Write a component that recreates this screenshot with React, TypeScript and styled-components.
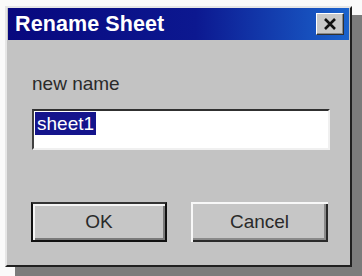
import React from 'react'
import styled, { createGlobalStyle } from 'styled-components'

const GlobalStyle = createGlobalStyle`
  html, body {
    margin: 0;
    padding: 0;
    background: #fafafa;
    font-family: 'Liberation Sans', Arial, sans-serif;
  }
`

const Page = styled.div`
  width: 362px;
  height: 276px;
  padding: 6px 0 0 5px;
  box-sizing: border-box;
  overflow: hidden;
`

const Window = styled.div`
  width: 347px;
  height: 261px;
  box-sizing: border-box;
  display: flex;
  flex-direction: column;
  background: #c3c3c3;
  border-top: 2px solid #e6e6e6;
  border-left: 2px solid #e6e6e6;
  border-right: 2px solid #202020;
  border-bottom: 2px solid #202020;
  box-shadow: 10px 9px 0 #7c7c7c;
`

const TitleBar = styled.div`
  height: 32px;
  margin: 0 1px;
  padding: 0 5px 0 7px;
  display: flex;
  align-items: center;
  justify-content: space-between;
  background: linear-gradient(90deg, #08087e 0%, #0c1890 55%, #1a62cc 100%);
`

const Title = styled.span`
  color: #fff;
  font-weight: bold;
  font-size: 21.5px;
  letter-spacing: 0.1px;
`

const CloseButton = styled.div`
  width: 28px;
  height: 22px;
  box-sizing: border-box;
  display: flex;
  align-items: center;
  justify-content: center;
  background: #c8c8c8;
  border-top: 1px solid #fff;
  border-left: 1px solid #fff;
  border-right: 1px solid #303030;
  border-bottom: 1px solid #303030;
  box-shadow: inset -1px -1px 0 #8a8a8a;
`

const Body = styled.div`
  flex: 1;
  display: flex;
  flex-direction: column;
  padding: 33px 20px 0 25px;
`

const Label = styled.div`
  font-size: 19px;
  line-height: 22px;
  color: #2a2a2a;
`

const Field = styled.div`
  margin-top: 14px;
  width: 298px;
  height: 41px;
  box-sizing: border-box;
  padding: 1px 1px;
  background: #fff;
  border-top: 2px solid #303030;
  border-left: 2px solid #404040;
  border-right: 2px solid #f0f0f0;
  border-bottom: 2px solid #f0f0f0;
`

const Selected = styled.span`
  display: inline-block;
  padding: 0 2px;
  height: 23px;
  line-height: 23px;
  font-size: 19px;
  color: #fff;
  background: #14148c;
`

const Buttons = styled.div`
  margin-top: 52px;
  margin-left: -1px;
  display: flex;
  gap: 24px;
`

const Button = styled.div<{ $default?: boolean; $w: number }>`
  width: ${(p) => p.$w}px;
  height: 40px;
  box-sizing: border-box;
  display: flex;
  align-items: center;
  justify-content: center;
  font-size: 19px;
  color: #2a2a2a;
  background: #c6c6c6;
  border: ${(p) => (p.$default ? '2px solid #111' : '0')};
  border-top-color: ${(p) => (p.$default ? '#333' : 'transparent')};
  box-shadow: ${(p) =>
    p.$default
      ? 'inset 2px 2px 0 #f4f4f4, inset -2px -2px 0 #7a7a7a'
      : 'inset 2px 2px 0 #f8f8f8, inset -2px -2px 0 #2a2a2a, inset -4px -4px 0 #8a8a8a'};
`

const App: React.FC = () => {
  return (
    <Page>
      <GlobalStyle />
      <Window>
        <TitleBar>
          <Title>Rename Sheet</Title>
          <CloseButton>
            <svg width="14" height="12" viewBox="0 0 14 12">
              <path d="M2 1 L12 11 M12 1 L2 11" stroke="#111" strokeWidth="2.6" />
            </svg>
          </CloseButton>
        </TitleBar>
        <Body>
          <Label>new name</Label>
          <Field>
            <Selected>sheet1</Selected>
          </Field>
          <Buttons>
            <Button $default $w={136}>OK</Button>
            <Button $w={137}>Cancel</Button>
          </Buttons>
        </Body>
      </Window>
    </Page>
  )
}

export default App
